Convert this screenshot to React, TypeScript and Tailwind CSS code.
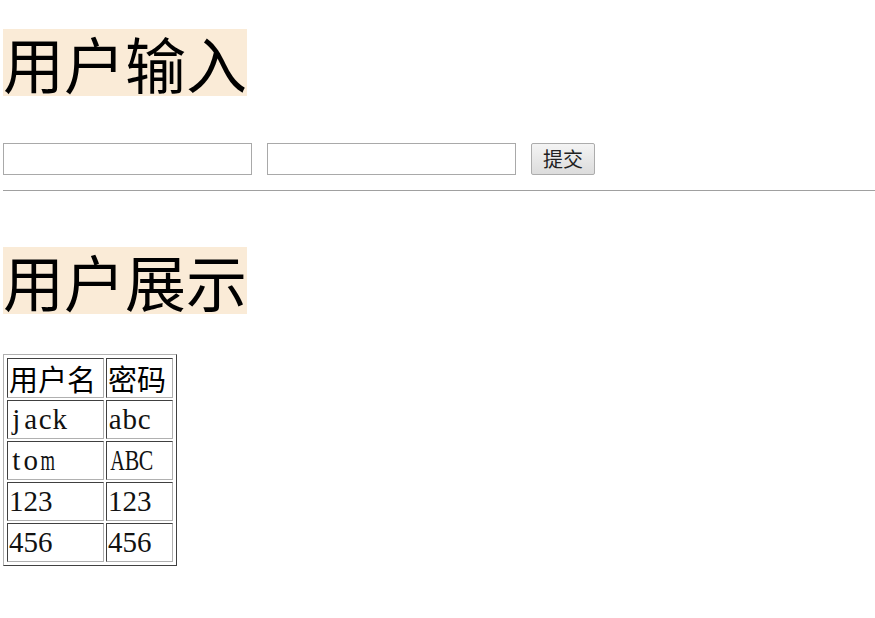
import React from "react";

const users = [
  { name: "jack", pwd: "abc" },
  { name: "tom", pwd: "ABC" },
  { name: "123", pwd: "123" },
  { name: "456", pwd: "456" },
];

// rough advance widths (em) of the serif face, for squeezing into half-width slots
const advance: Record<string, number> = {
  A: 0.722, B: 0.667, C: 0.667, m: 0.778, j: 0.278, t: 0.278,
};

const cjk = { fontFamily: '"Noto Sans CJK SC", sans-serif' };
const cell =
  "p-px border border-t-[#404040] border-l-[#404040] border-r-[#b0b0b0] border-b-[#b0b0b0] text-left align-middle whitespace-nowrap";

// half-width serif glyphs, each in a fixed-width slot
const Mono: React.FC<{ text: string }> = ({ text }) => (
  <div className="h-[35px] flex items-center font-['Liberation_Serif',serif] text-[29px] leading-[35px] text-[#111]">
    {text.split("").map((c, i) => {
      const w = advance[c] ?? 0.5;
      return (
        <span
          key={i}
          className="inline-block w-[14.5px] text-center"
          style={w > 0.5 ? { transform: `scaleX(${0.5 / w})` } : undefined}
        >
          {c}
        </span>
      );
    })}
  </div>
);

const App: React.FC = () => {
  return (
    <div className="pl-[3px] pt-[29px] text-black bg-white min-h-[618px]" style={cjk}>
      <h1 className="inline-block bg-[#faebd7] text-[61px] leading-[67px] font-normal">用户输入</h1>

      <div className="flex items-center gap-[15px] mt-[47px]">
        <input type="text" className="w-[249px] h-[32px] border border-[#a9a9a9] bg-white outline-none" />
        <input type="text" className="w-[249px] h-[32px] border border-[#a9a9a9] bg-white outline-none" />
        <button className="w-[64px] h-[32px] border border-[#acacac] rounded-[2px] bg-gradient-to-b from-[#f4f4f4] to-[#dcdcdc] text-[20px] leading-[30px] text-[#222]">
          提交
        </button>
      </div>

      <hr className="mt-[15px] border-0 border-t border-[#a0a0a0]" />

      <h1 className="inline-block mt-[56px] bg-[#faebd7] text-[61px] leading-[67px] font-normal">用户展示</h1>

      <table className="mt-[40px] border-separate border-spacing-[2px] p-px border border-t-[#b0b0b0] border-l-[#b0b0b0] border-r-[#404040] border-b-[#404040]">
        <thead>
          <tr>
            <th className={`${cell} h-[40px] w-[97px] font-normal text-[29px] leading-[36px]`}>用户名</th>
            <th className={`${cell} h-[40px] w-[67px] font-normal text-[29px] leading-[36px]`}>密码</th>
          </tr>
        </thead>
        <tbody>
          {users.map((u) => (
            <tr key={u.name}>
              <td className={`${cell} h-[39px]`}>
                <Mono text={u.name} />
              </td>
              <td className={`${cell} h-[39px]`}>
                <Mono text={u.pwd} />
              </td>
            </tr>
          ))}
        </tbody>
      </table>
    </div>
  );
};

export default App;
